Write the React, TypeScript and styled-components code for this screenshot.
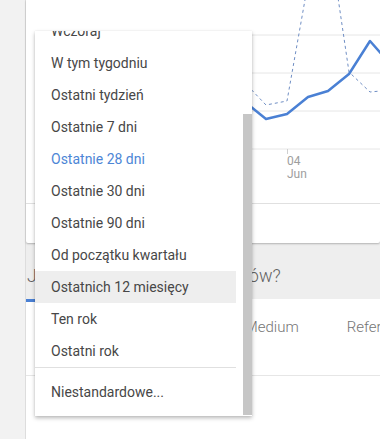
import React from 'react'
import styled, { createGlobalStyle } from 'styled-components'

const Global = createGlobalStyle`
  html, body {
    margin: 0;
    padding: 0;
    background: #eeeeee;
    font-family: Roboto, "Noto Sans", Arial, sans-serif;
    overflow: hidden;
  }
`

const Page = styled.div`
  display: flex;
  width: 380px;
  height: 439px;
  overflow: hidden;
`

const LeftRail = styled.div`
  flex: 0 0 25px;
  background: #f2f2f2;
  border-right: 1px solid #dddddd;
`

const Main = styled.div`
  position: relative;
  flex: 1;
  display: flex;
  flex-direction: column;
  background: #eeeeee;
  min-width: 0;
`

const ChartCard = styled.div`
  height: 243px;
  background: #fff;
  border-radius: 0 0 2px 2px;
  box-shadow: 0 1px 2px rgba(0, 0, 0, 0.25);
  display: flex;
  flex-direction: column;
`

const ChartArea = styled.div`
  height: 203px;
  border-bottom: 1px solid #e0e0e0;
  svg { display: block; }
`

const Heading = styled.h2`
  margin: 0;
  padding: 21px 0 11px 1px;
  font-size: 18px;
  line-height: 24px;
  font-weight: 300;
  color: #616161;
  white-space: nowrap;
`

const TabsCard = styled.div`
  flex: 1;
  background: #fff;
`

const TabRow = styled.div`
  display: flex;
  height: 56px;
  overflow: hidden;
`

const Tab = styled.div<{ $active?: boolean; $indent?: number }>`
  display: flex;
  align-items: center;
  padding: 0 24px 0 ${p => p.$indent ?? 24}px;
  font-size: 15px;
  font-weight: 300;
  color: #757575;
  white-space: nowrap;
  box-shadow: ${p => (p.$active ? 'inset 0 3px 0 #4a80d4' : 'none')};
`

const TabsBody = styled.div`
  height: 20px;
  border-bottom: 1px solid #e6e6e6;
`

const Menu = styled.div`
  position: absolute;
  left: 9px;
  top: 31px;
  width: 217px;
  height: 385px;
  display: flex;
  background: #fff;
  box-shadow: 0 2px 4px rgba(0, 0, 0, 0.28), 0 0 1px rgba(0, 0, 0, 0.1);
  overflow: hidden;
`

const Viewport = styled.div`
  flex: 1;
  overflow: hidden;
`

const List = styled.ul`
  list-style: none;
  margin: -16px 0 0;
  padding: 0 0 8px;
`

const Item = styled.li<{ $selected?: boolean; $hover?: boolean }>`
  height: 32px;
  line-height: 32px;
  padding-left: 16px;
  font-size: 14px;
  color: ${p => (p.$selected ? '#4d86d6' : '#474747')};
  background: ${p => (p.$hover ? '#eeeeee' : 'transparent')};
  white-space: nowrap;
`

const Divider = styled.li`
  height: 1px;
  background: #e0e0e0;
  margin-bottom: 8px;
`

const ScrollTrack = styled.div`
  flex: 0 0 16px;
  padding-left: 7px;
  box-sizing: border-box;
`

const ScrollThumb = styled.div`
  width: 9px;
  height: 301px;
  margin-top: 83px;
  background: #c6c6c6;
`

const solid: [number, number][] = [
  [160, 120], [182, 112], [203, 118], [224, 104], [245, 102], [266, 119],
  [287, 114], [308, 97], [328, 91], [349, 74], [370, 41], [391, 65],
]
const dashed: [number, number][] = [
  [182, 70], [203, 95], [224, 60], [245, 83], [266, 105], [287, 101],
  [308, -17], [328, -70], [349, 72], [370, 92], [391, 90],
]
const toPts = (a: [number, number][]) => a.map(p => p.join(',')).join(' ')

function Chart() {
  return (
    <svg width="354" height="203" viewBox="26 0 354 203">
      {[35, 73, 111, 149].map(y => (
        <line key={y} x1="90" x2="380" y1={y} y2={y} stroke="#e6e6e6" strokeWidth="1" />
      ))}
      <line x1="287.5" x2="287.5" y1="149" y2="154" stroke="#cfcfcf" />
      <polyline points={toPts(dashed)} fill="none" stroke="#6f8ec4" strokeWidth="1" strokeDasharray="3 3" />
      <polyline points={toPts(solid)} fill="none" stroke="#4a80d4" strokeWidth="2.5" strokeLinejoin="round" />
      <text x="287" y="165" fontSize="12" fill="#9e9e9e" fontFamily="Roboto, Arial, sans-serif">04</text>
      <text x="287" y="178" fontSize="12" fill="#9e9e9e" fontFamily="Roboto, Arial, sans-serif">Jun</text>
    </svg>
  )
}

const ranges = [
  'Wczoraj',
  'W tym tygodniu',
  'Ostatni tydzień',
  'Ostatnie 7 dni',
  'Ostatnie 28 dni',
  'Ostatnie 30 dni',
  'Ostatnie 90 dni',
  'Od początku kwartału',
  'Ostatnich 12 miesięcy',
  'Ten rok',
  'Ostatni rok',
]

export default function App() {
  return (
    <Page>
      <Global />
      <LeftRail />
      <Main>
        <ChartCard>
          <ChartArea>
            <Chart />
          </ChartArea>
        </ChartCard>
        <Heading>Jak pozyskujesz użytkowników?</Heading>
        <TabsCard>
          <TabRow>
            <Tab $active $indent={43}>Kanał ruchu</Tab>
            <Tab>Źródło/Medium</Tab>
            <Tab>Referral</Tab>
          </TabRow>
          <TabsBody />
        </TabsCard>
        <Menu>
          <Viewport>
            <List>
              {ranges.map(r => (
                <Item
                  key={r}
                  $selected={r === 'Ostatnie 28 dni'}
                  $hover={r === 'Ostatnich 12 miesięcy'}
                >
                  {r}
                </Item>
              ))}
              <Divider />
              <Item>Niestandardowe...</Item>
            </List>
          </Viewport>
          <ScrollTrack>
            <ScrollThumb />
          </ScrollTrack>
        </Menu>
      </Main>
    </Page>
  )
}
